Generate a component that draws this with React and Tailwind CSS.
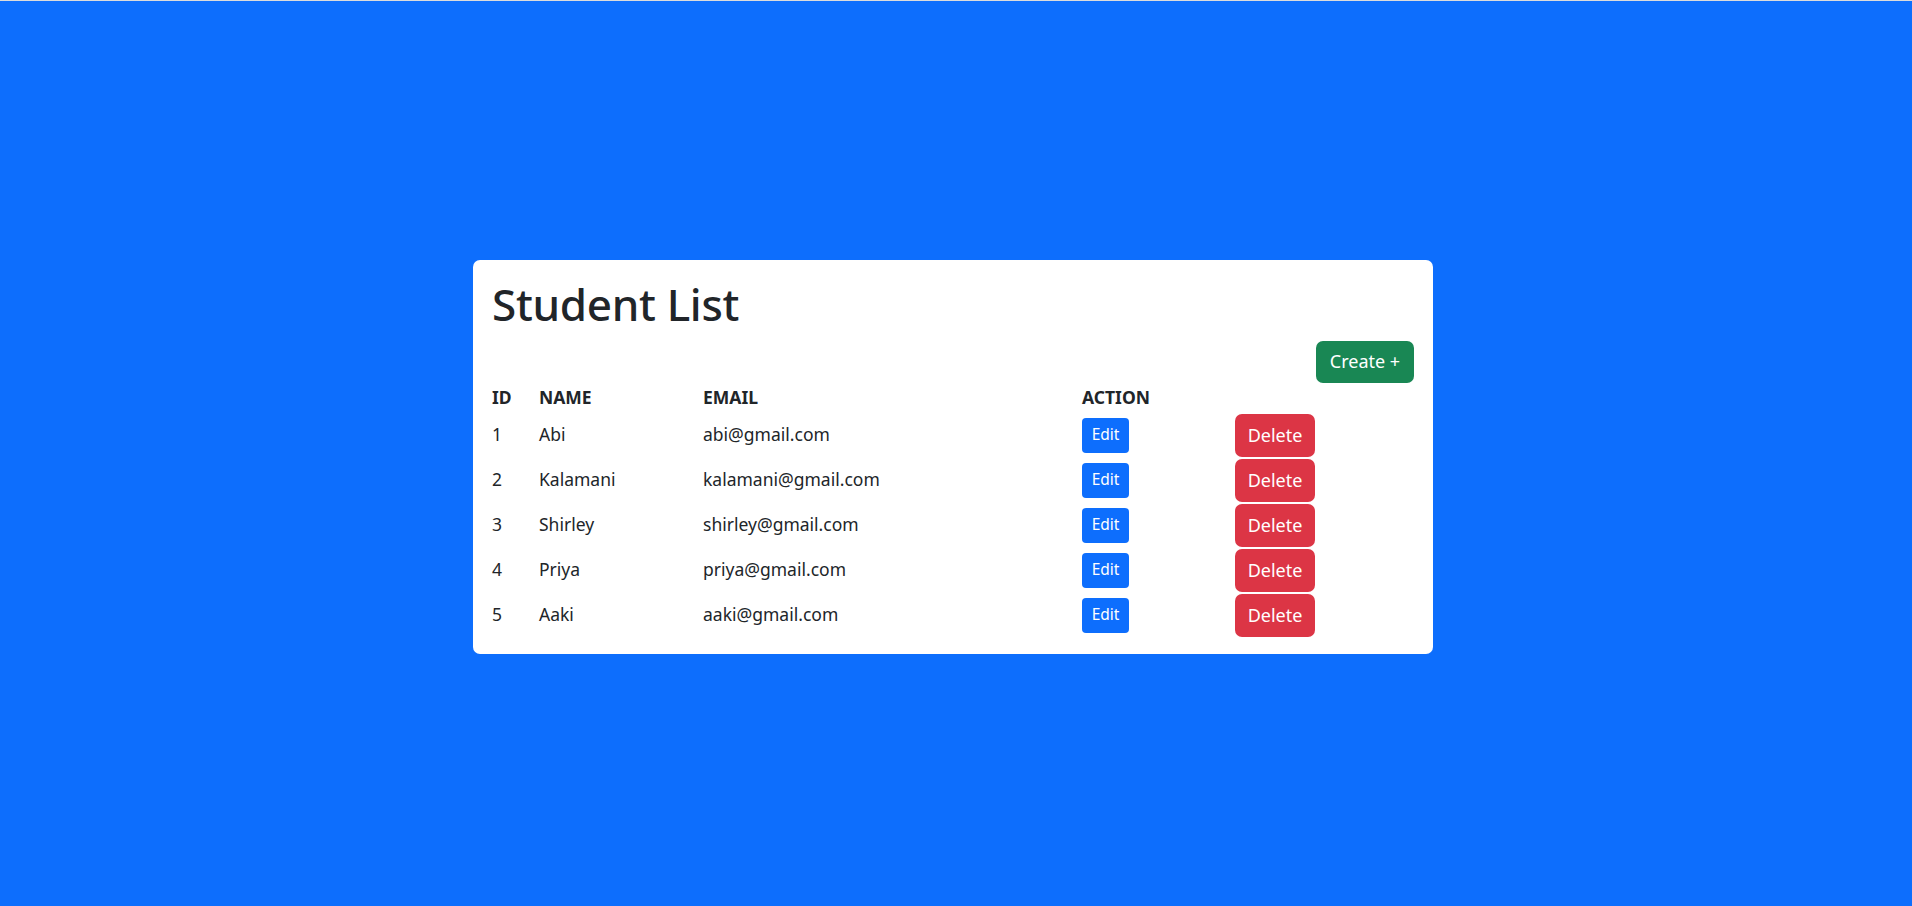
const students = [
  { id: 1, name: 'Abi', email: 'abi@gmail.com' },
  { id: 2, name: 'Kalamani', email: 'kalamani@gmail.com' },
  { id: 3, name: 'Shirley', email: 'shirley@gmail.com' },
  { id: 4, name: 'Priya', email: 'priya@gmail.com' },
  { id: 5, name: 'Aaki', email: 'aaki@gmail.com' },
]

export default function App() {
  return (
    <div className="min-h-screen bg-[#0d6efd] flex flex-col" style={{ fontFamily: '"Noto Sans", "Open Sans", sans-serif' }}>
      <div className="h-px bg-[#dcdcdc]"></div>
      <div className="flex-1 flex items-center justify-center pt-[6px] pr-[6px]">
        <div className="w-[960px] bg-white rounded-[7px] px-[19px] pt-[16px] pb-[16px] text-[#212529]">
          <h1 className="h-[58px] flex items-center text-[44px] font-medium leading-[1.2] tracking-[-0.3px]">Student List</h1>
          <div className="flex justify-end mt-[7px]">
            <button className="w-[98px] h-[42px] bg-[#198754] text-white text-[18px] rounded-[7px]">Create +</button>
          </div>
          <div className="grid grid-cols-[47px_164px_379px_153px_1fr] text-[17.5px]">
            <div className="h-[30px] flex items-center font-bold">ID</div>
            <div className="h-[30px] flex items-center font-bold">NAME</div>
            <div className="h-[30px] flex items-center font-bold">EMAIL</div>
            <div className="h-[30px] flex items-center font-bold">ACTION</div>
            <div className="h-[30px]"></div>
            {students.map(s => (
              <div key={s.id} className="contents">
                <div className="h-[45px] flex items-center pb-px">{s.id}</div>
                <div className="h-[45px] flex items-center pb-px">{s.name}</div>
                <div className="h-[45px] flex items-center pb-px">{s.email}</div>
                <div className="h-[45px] flex items-center">
                  <button className="w-[47px] h-[35px] bg-[#0d6efd] text-white text-[15.5px] rounded-[4px]">Edit</button>
                </div>
                <div className="h-[45px] flex items-center">
                  <button className="w-[80px] h-[43px] bg-[#dc3545] text-white text-[18px] rounded-[7px]">Delete</button>
                </div>
              </div>
            ))}
          </div>
        </div>
      </div>
    </div>
  )
}
